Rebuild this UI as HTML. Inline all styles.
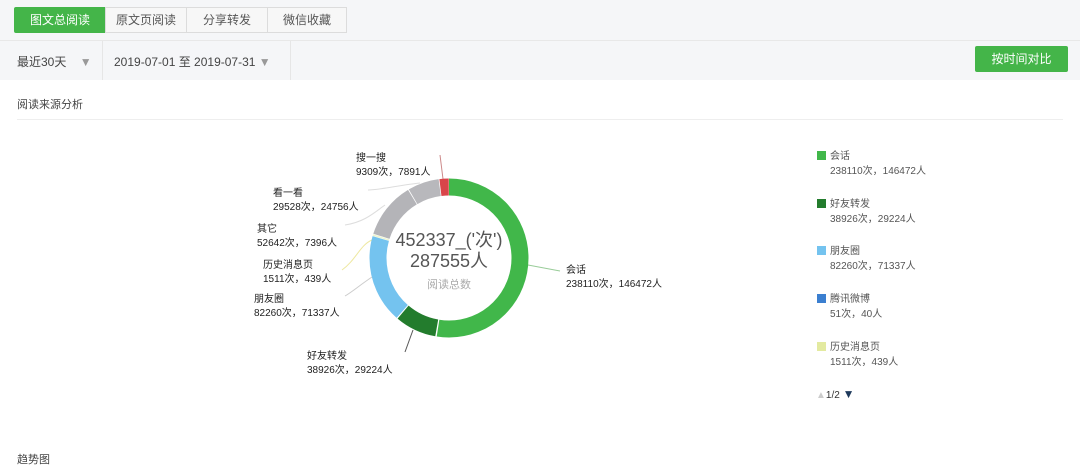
<!DOCTYPE html>
<html><head><meta charset="utf-8"><style>
body{margin:0;width:1080px;height:459px;overflow:hidden;background:#fff;font-family:"Liberation Sans","Noto Sans CJK SC",sans-serif;color:#333;position:relative}
.top{position:absolute;left:0;top:0;width:1080px;height:80px;background:#f5f6f8}
.tabs{position:absolute;left:15px;top:7px;display:flex}
.tab{height:24px;line-height:24px;font-size:12px;text-align:center;border:1px solid #dcdcdc;background:#f7f7f7;color:#555;margin-left:-1px}
.tab.on{background:#44b549;color:#fff;border-color:#44b549;border-radius:2px 0 0 2px}
.bar{position:absolute;top:40px;left:0;width:1080px;height:40px;border-top:1px solid #e8e8e8}
.t{position:absolute;font-size:12px;white-space:nowrap}
.btn{position:absolute;left:975px;top:46px;width:93px;height:26px;background:#44b549;color:#fff;font-size:12px;line-height:26px;text-align:center;border-radius:2px}
.lab{position:absolute;font-size:10px;line-height:14px;color:#222;white-space:nowrap}
.lg{position:absolute;left:817px;font-size:10px;line-height:15px;color:#555}
.lg i{position:absolute;left:0;top:2px;width:9px;height:9px}
.lg span{display:block;padding-left:13px}
</style></head><body>
<div class="top"></div>
<div class="tabs">
<div class="tab on" style="width:90px">图文总阅读</div>
<div class="tab" style="width:80px">原文页阅读</div>
<div class="tab" style="width:80px">分享转发</div>
<div class="tab" style="width:78px">微信收藏</div>
</div>
<div class="bar"></div>
<div style="position:absolute;left:102px;top:41px;width:1px;height:39px;background:#e6e6e6"></div>
<div style="position:absolute;left:290px;top:41px;width:1px;height:39px;background:#e6e6e6"></div>
<div class="t" style="left:17px;top:53px;color:#444">最近30天 <span style="color:#999;margin-left:10px">▼</span></div>
<div class="t" style="left:114px;top:53px;color:#444">2019-07-01 至 2019-07-31 <span style="color:#999">▼</span></div>
<div class="btn">按时间对比</div>
<div class="t" style="left:17px;top:96px;font-size:11px;color:#444">阅读来源分析</div>
<div style="position:absolute;left:17px;top:119px;width:1046px;height:1px;background:#eee"></div>
<svg style="position:absolute;left:0;top:0" width="1080" height="459">
<g fill="none" stroke-width="1">
<path d="M528 265 L560 271" stroke="#9c9"/>
<path d="M413 330 L405 352" stroke="#555"/>
<path d="M372 277 C360 285 352 292 345 296" stroke="#ccc"/>
<path d="M372 240 C360 245 356 260 342 270" stroke="#eee8a0"/>
<path d="M385 205 C375 212 365 222 345 225" stroke="#ddd"/>
<path d="M420 183 C400 185 380 190 368 190" stroke="#ddd"/>
<path d="M443 179 L440 155" stroke="#c88"/>
</g>
<g transform="rotate(-90 449 258)" fill="none" stroke-width="17">
<circle cx="449" cy="258" r="71" stroke="#41b74a" stroke-dasharray="234 500" stroke-dashoffset="0"/>
<circle cx="449" cy="258" r="71" stroke="#237c2d" stroke-dasharray="37.6 500" stroke-dashoffset="-235.3"/>
<circle cx="449" cy="258" r="71" stroke="#74c3ef" stroke-dasharray="80.2 500" stroke-dashoffset="-274"/>
<circle cx="449" cy="258" r="71" stroke="#eef5d0" stroke-dasharray="1.5 500" stroke-dashoffset="-354.5"/>
<circle cx="449" cy="258" r="71" stroke="#b4b4b8" stroke-dasharray="51 500" stroke-dashoffset="-356.5"/>
<circle cx="449" cy="258" r="71" stroke="#b8b8bc" stroke-dasharray="28.3 500" stroke-dashoffset="-408.3"/>
<circle cx="449" cy="258" r="71" stroke="#d9454a" stroke-dasharray="8.4 500" stroke-dashoffset="-437.3"/>
</g>
<text x="449" y="246" font-size="18" fill="#555" text-anchor="middle" font-family="Liberation Sans,Noto Sans CJK SC,sans-serif">452337_('次')</text>
<text x="449" y="267" font-size="18" fill="#555" text-anchor="middle" font-family="Liberation Sans,Noto Sans CJK SC,sans-serif">287555人</text>
<text x="449" y="288" font-size="11" fill="#aaa" text-anchor="middle" font-family="Liberation Sans,Noto Sans CJK SC,sans-serif">阅读总数</text>
</svg>
<div class="lab" style="left:356px;top:152px">搜一搜<br>9309次，7891人</div>
<div class="lab" style="left:273px;top:187px">看一看<br>29528次，24756人</div>
<div class="lab" style="left:257px;top:223px">其它<br>52642次，7396人</div>
<div class="lab" style="left:263px;top:259px">历史消息页<br>1511次，439人</div>
<div class="lab" style="left:254px;top:293px">朋友圈<br>82260次，71337人</div>
<div class="lab" style="left:307px;top:350px">好友转发<br>38926次，29224人</div>
<div class="lab" style="left:566px;top:264px">会话<br>238110次，146472人</div>
<div class="lg" style="top:149px"><i style="background:#41b74a"></i><span>会话</span><span>238110次，146472人</span></div>
<div class="lg" style="top:197px"><i style="background:#237c2d"></i><span>好友转发</span><span>38926次，29224人</span></div>
<div class="lg" style="top:244px"><i style="background:#74c3ef"></i><span>朋友圈</span><span>82260次，71337人</span></div>
<div class="lg" style="top:292px"><i style="background:#3b7fd0"></i><span>腾讯微博</span><span>51次，40人</span></div>
<div class="lg" style="top:340px"><i style="background:#e3eaa0"></i><span>历史消息页</span><span>1511次，439人</span></div>
<div class="t" style="left:816px;top:387px;font-size:10px;color:#333"><span style="color:#ccc">▲</span>1/2 <span style="color:#1e3a5c;font-size:12px">▼</span></div>
<div class="t" style="left:17px;top:451px;font-size:11px;color:#444">趋势图</div>
</body></html>
